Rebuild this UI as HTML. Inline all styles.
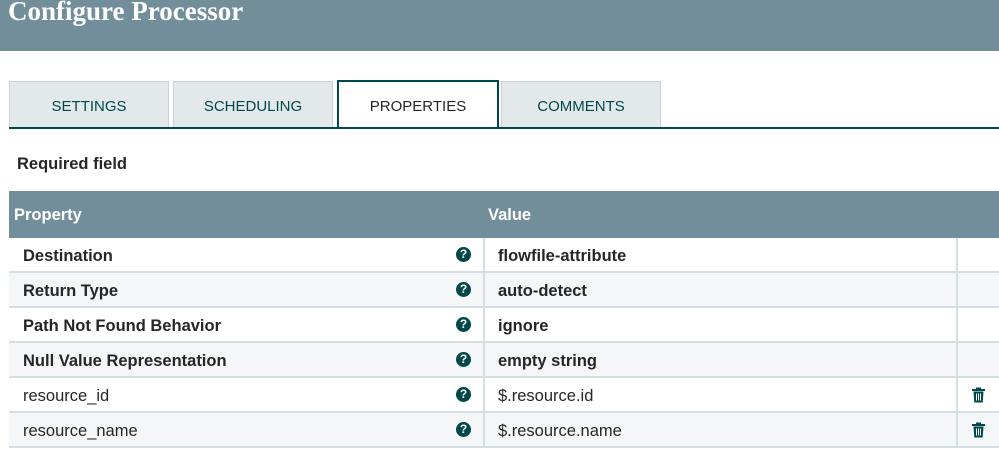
<!DOCTYPE html>
<html><head><style>
body{margin:0;width:999px;height:459px;background:#fff;font-family:"Liberation Sans",sans-serif;overflow:hidden;position:relative}
.hdr{position:absolute;left:0;top:0;width:999px;height:51px;background:#728e9b}
.hdr span{position:absolute;left:8px;top:-4px;font:bold 27px "Liberation Serif",serif;color:#fff}
.tab{position:absolute;top:81px;height:46px;width:158px;background:#e3e8eb;border:1px solid #c7d2d7;border-bottom:none;text-align:center;line-height:50px;font-size:15px;color:#004849}
.tab.act{background:#fff;border:2px solid #004849;border-bottom:none;color:#262626;height:47px;top:80px}
.line{position:absolute;left:9px;top:127px;width:990px;height:2px;background:#004849}
.req{position:absolute;left:17px;top:155px;font-weight:bold;font-size:16.5px;color:#262626}
.th{position:absolute;left:9px;top:191px;width:990px;height:47px;background:#728e9b;color:#fff;font-weight:bold;font-size:16.5px}
.th span{position:absolute;top:15px}
.row{position:absolute;left:9px;width:990px;height:33px;border-bottom:2px solid #d5dee2;font-size:16.5px;color:#262626}
.row span{position:absolute;top:9px}
.c1{position:absolute;left:474px;top:0;width:2px;height:35px;background:#d5dee2}
.c2{position:absolute;left:947px;top:0;width:2px;height:35px;background:#d5dee2}
.q{position:absolute;left:447px;top:9px;width:15px;height:15px;border-radius:50%;background:#004849;color:#fff;font-size:12px;font-weight:bold;text-align:center;line-height:15px}
.b{font-weight:bold}
</style></head><body>
<div class="hdr"><span>Configure Processor</span></div>
<div class="tab" style="left:9px">SETTINGS</div>
<div class="tab" style="left:173px">SCHEDULING</div>
<div class="tab act" style="left:337px">PROPERTIES</div>
<div class="tab" style="left:501px">COMMENTS</div>
<div class="line"></div>
<div class="req">Required field</div>
<div class="th"><span style="left:5px">Property</span><span style="left:479px">Value</span></div>

<div class="row b" style="top:238px;background:#fff"><span style="left:14px">Destination</span><div class="q">?</div><div class="c1"></div><span style="left:489px">flowfile-attribute</span><div class="c2"></div></div>
<div class="row b" style="top:273px;background:#f4f6f7"><span style="left:14px">Return Type</span><div class="q">?</div><div class="c1"></div><span style="left:489px">auto-detect</span><div class="c2"></div></div>
<div class="row b" style="top:308px;background:#fff"><span style="left:14px">Path Not Found Behavior</span><div class="q">?</div><div class="c1"></div><span style="left:489px">ignore</span><div class="c2"></div></div>
<div class="row b" style="top:343px;background:#f4f6f7"><span style="left:14px">Null Value Representation</span><div class="q">?</div><div class="c1"></div><span style="left:489px">empty string</span><div class="c2"></div></div>
<div class="row" style="top:378px;background:#fff"><span style="left:14px">resource_id</span><div class="q">?</div><div class="c1"></div><span style="left:489px">$.resource.id</span><div class="c2"></div>
<svg style="position:absolute;left:963px;top:9px" width="13" height="16" viewBox="0 0 13 15"><rect x="0" y="1.5" width="13" height="2" fill="#004849"/><rect x="4" y="0" width="5" height="2" fill="#004849"/><path d="M1.5 4h10l-0.8 11H2.3z" fill="#004849"/><rect x="4" y="6" width="1" height="7" fill="#fff"/><rect x="6" y="6" width="1" height="7" fill="#fff"/><rect x="8" y="6" width="1" height="7" fill="#fff"/></svg></div>
<div class="row" style="top:413px;background:#f4f6f7"><span style="left:14px">resource_name</span><div class="q">?</div><div class="c1"></div><span style="left:489px">$.resource.name</span><div class="c2"></div>
<svg style="position:absolute;left:963px;top:9px" width="13" height="16" viewBox="0 0 13 15"><rect x="0" y="1.5" width="13" height="2" fill="#004849"/><rect x="4" y="0" width="5" height="2" fill="#004849"/><path d="M1.5 4h10l-0.8 11H2.3z" fill="#004849"/><rect x="4" y="6" width="1" height="7" fill="#fff"/><rect x="6" y="6" width="1" height="7" fill="#fff"/><rect x="8" y="6" width="1" height="7" fill="#fff"/></svg></div>
</body></html>
